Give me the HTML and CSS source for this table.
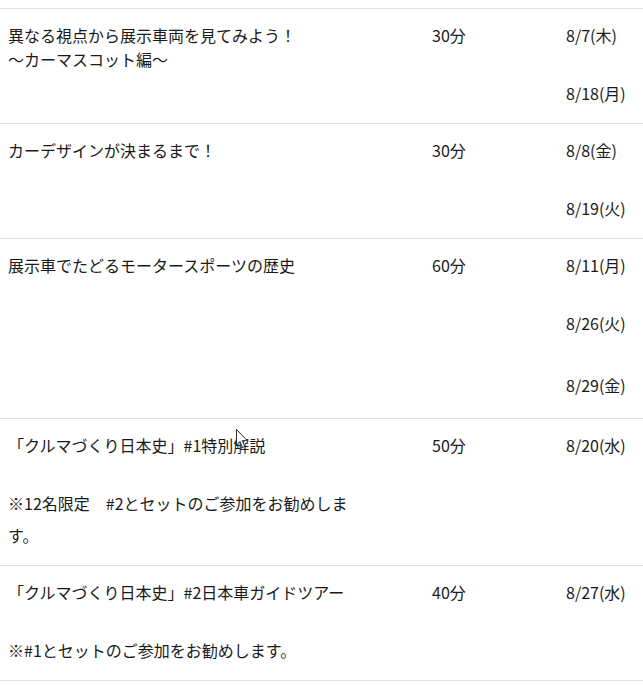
FILE: index.html
```html
<!DOCTYPE html>
<html lang="ja">
<head>
<meta charset="utf-8">
<title>展示車ツアー</title>
<link rel="stylesheet" href="styles.css">
</head>
<body>
<div class="schedule">
  <div class="row">
    <div class="cell cell--title">
      <p class="title">異なる視点から展示車両を見てみよう！<br>～カーマスコット編～</p>
    </div>
    <div class="cell cell--time"><p class="title">30分</p></div>
    <div class="cell cell--dates">
      <p class="date">8/7(木)</p>
      <p class="date">8/18(月)</p>
    </div>
  </div>
  <div class="row">
    <div class="cell cell--title">
      <p class="title">カーデザインが決まるまで！</p>
    </div>
    <div class="cell cell--time"><p class="title">30分</p></div>
    <div class="cell cell--dates">
      <p class="date">8/8(金)</p>
      <p class="date">8/19(火)</p>
    </div>
  </div>
  <div class="row">
    <div class="cell cell--title">
      <p class="title">展示車でたどるモータースポーツの歴史</p>
    </div>
    <div class="cell cell--time"><p class="title">60分</p></div>
    <div class="cell cell--dates">
      <p class="date">8/11(月)</p>
      <p class="date">8/26(火)</p>
      <p class="date date--late">8/29(金)</p>
    </div>
  </div>
  <div class="row">
    <div class="cell cell--title">
      <p class="title">「クルマづくり日本史」#1特別解説</p>
      <p class="note">※12名限定　#2とセットのご参加をお勧めします。</p>
    </div>
    <div class="cell cell--time"><p class="title">50分</p></div>
    <div class="cell cell--dates">
      <p class="date">8/20(水)</p>
    </div>
  </div>
  <div class="row">
    <div class="cell cell--title">
      <p class="title">「クルマづくり日本史」#2日本車ガイドツアー</p>
      <p class="note">※#1とセットのご参加をお勧めします。</p>
    </div>
    <div class="cell cell--time"><p class="title">40分</p></div>
    <div class="cell cell--dates">
      <p class="date">8/27(水)</p>
    </div>
  </div>
</div>
<svg class="cursor" width="13" height="20" viewBox="0 0 13 20" aria-hidden="true">
  <path d="M0.5 0.5 L0.5 16 L4 12.5 L6.5 18.5 L8.8 17.5 L6.3 11.6 L11.2 11.6 Z" fill="#fff" stroke="#333" stroke-width="1" stroke-linejoin="round"/>
</svg>
</body>
</html>
```

FILE: styles.css
```css
html, body {
  margin: 0;
  padding: 0;
  background: #fff;
}

body {
  padding-top: 8px;
  font-family: "Noto Sans CJK JP", "Noto Sans", sans-serif;
  font-size: 16px;
  color: #1a1a1a;
  position: relative;
}

.schedule {
  border-top: 1px solid #dedede;
}

.row {
  display: grid;
  grid-template-columns: 424px 134px 1fr;
  border-bottom: 1px solid #dedede;
}

.cell {
  padding: 14px 8px 18px 8px;
}

.cell--title {
  padding-right: 66px;
  padding-bottom: 14px;
}

.title,
.date,
.note {
  margin: 0;
  line-height: 24px;
}

.date + .date {
  margin-top: 34px;
}

.date--late.date--late {
  margin-top: 38px;
  margin-bottom: 3px;
}

.note {
  margin-top: 30px;
  line-height: 32px;
}

.cursor {
  position: absolute;
  left: 236px;
  top: 429px;
}
```
